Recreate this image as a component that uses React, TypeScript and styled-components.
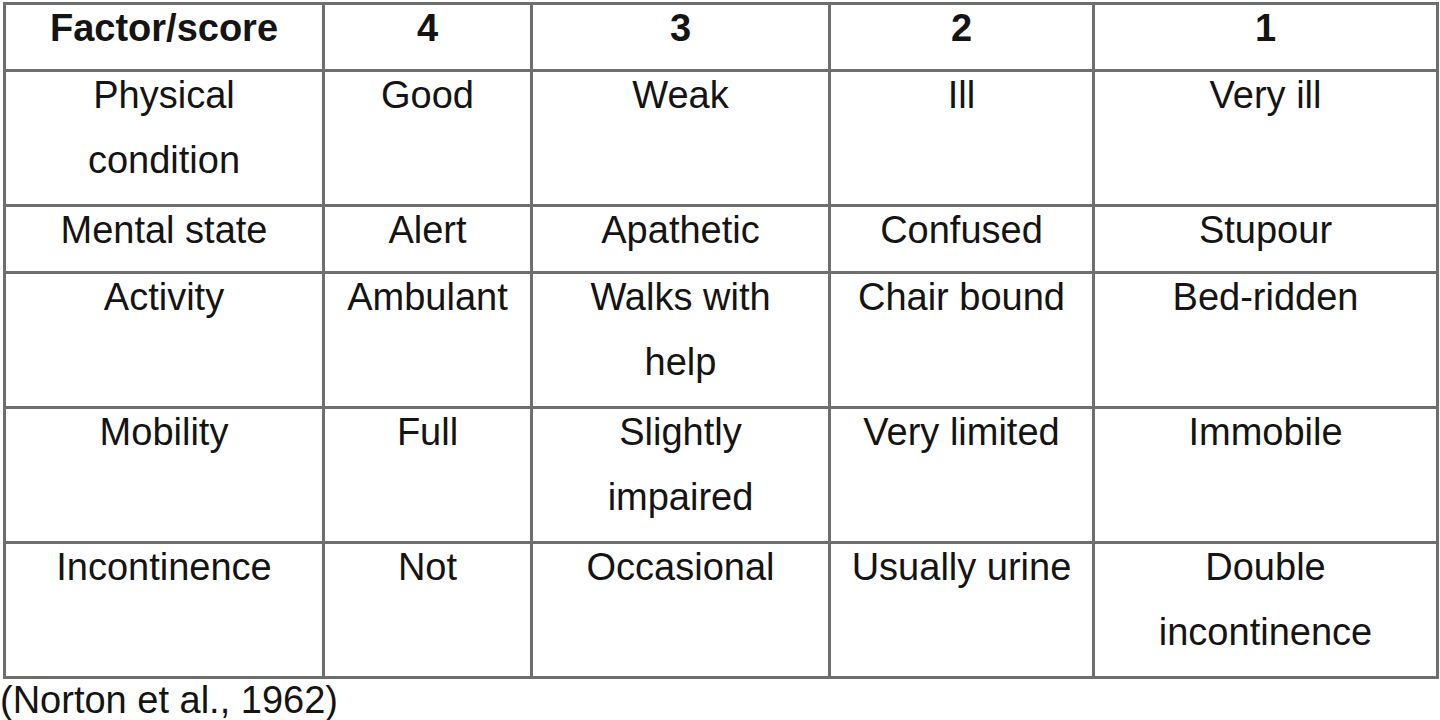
import React from 'react';
import styled, { createGlobalStyle } from 'styled-components';

const GlobalStyle = createGlobalStyle`
  html, body {
    margin: 0;
    padding: 0;
    background: #fff;
  }
  body {
    font-family: "Liberation Sans", Arial, sans-serif;
    color: #141414;
  }
`;

const Page = styled.div`
  width: 1440px;
  height: 720px;
  overflow: hidden;
`;

const Table = styled.table`
  border-collapse: collapse;
  table-layout: fixed;
  margin: 2px 0 0 3px;
  font-size: 38px;
`;

const Row = styled.tr<{ $tall?: boolean }>`
  height: ${({ $tall }) => ($tall ? '135px' : '67px')};
`;

const Cell = styled.td`
  border: 3px solid #6e6e6e;
  padding: 0;
  text-align: center;
  vertical-align: top;
  line-height: 65px;
  overflow: hidden;
`;

const HeadCell = styled(Cell).attrs({ as: 'th' })`
  font-weight: bold;
`;

const Text = styled.div`
  margin-top: -9px;
`;

const Caption = styled.div`
  font-size: 38px;
  line-height: 40px;
  margin-top: 1px;
  white-space: nowrap;
`;

const widths = [319, 208, 298, 264, 344];

const header = ['Factor/score', '4', '3', '2', '1'];

const rows: { tall: boolean; cells: string[][] }[] = [
  { tall: true, cells: [['Physical', 'condition'], ['Good'], ['Weak'], ['Ill'], ['Very ill']] },
  { tall: false, cells: [['Mental state'], ['Alert'], ['Apathetic'], ['Confused'], ['Stupour']] },
  { tall: true, cells: [['Activity'], ['Ambulant'], ['Walks with', 'help'], ['Chair bound'], ['Bed-ridden']] },
  { tall: true, cells: [['Mobility'], ['Full'], ['Slightly', 'impaired'], ['Very limited'], ['Immobile']] },
  { tall: true, cells: [['Incontinence'], ['Not'], ['Occasional'], ['Usually urine'], ['Double', 'incontinence']] },
];

const App = () => {
  return (
    <Page>
      <GlobalStyle />
      <Table>
        <colgroup>
          {widths.map((w, i) => (
            <col key={i} style={{ width: w }} />
          ))}
        </colgroup>
        <thead>
          <Row>
            {header.map((h) => (
              <HeadCell key={h}>
                <Text>{h}</Text>
              </HeadCell>
            ))}
          </Row>
        </thead>
        <tbody>
          {rows.map((r, i) => (
            <Row key={i} $tall={r.tall}>
              {r.cells.map((lines, j) => (
                <Cell key={j}>
                  <Text>
                    {lines.map((l, k) => (
                      <React.Fragment key={k}>
                        {k > 0 && <br />}
                        {l}
                      </React.Fragment>
                    ))}
                  </Text>
                </Cell>
              ))}
            </Row>
          ))}
        </tbody>
      </Table>
      <Caption>(Norton et al., 1962)</Caption>
    </Page>
  );
};

export default App;
